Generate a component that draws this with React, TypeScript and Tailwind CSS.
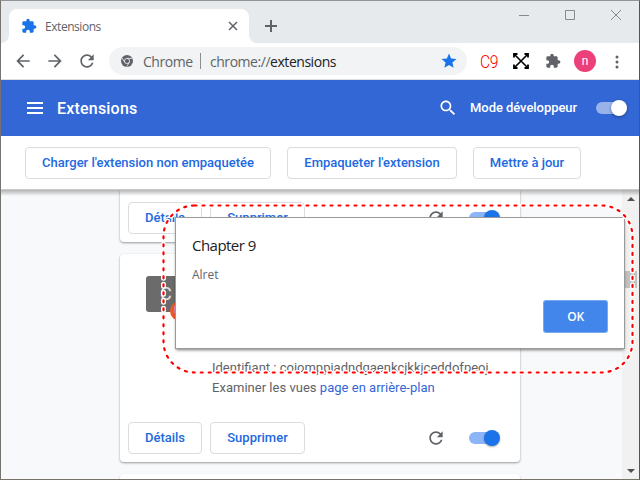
import React from 'react';

const PUZZLE =
  'M20.5 11H19V7c0-1.1-.9-2-2-2h-4V3.500C13 2.120 11.880 1 10.500 1S8 2.120 8 3.500V5H4c-1.100 0-1.990.9-1.990 2v3.800H3.500c1.490 0 2.700 1.210 2.700 2.700s-1.210 2.700-2.700 2.700H2V20c0 1.100.9 2 2 2h3.800v-1.500c0-1.490 1.210-2.700 2.700-2.700 1.490 0 2.700 1.210 2.700 2.700V22H17c1.100 0 2-.9 2-2v-4h1.500c1.380 0 2.500-1.120 2.500-2.500S21.880 11 20.500 11z';
const RELOAD =
  'M17.650 6.350C16.200 4.900 14.210 4 12 4c-4.420 0-7.990 3.580-7.990 8s3.570 8 7.990 8c3.730 0 6.840-2.550 7.730-6h-2.080c-.82 2.330-3.040 4-5.650 4-3.310 0-6-2.690-6-6s2.690-6 6-6c1.660 0 3.140.69 4.220 1.780L13 11h7V4l-2.350 2.350z';
const BACK = 'M20 11H7.830l5.590-5.590L12 4l-8 8 8 8 1.410-1.410L7.830 13H20v-2z';
const FORWARD = 'M12 4l-1.410 1.410L16.170 11H4v2h12.170l-5.580 5.590L12 20l8-8z';
const STAR = 'M12 17.270L18.180 21l-1.640-7.030L22 9.240l-7.190-.61L12 2 9.190 8.630 2 9.240l5.460 4.730L5.820 21z';
const SEARCH =
  'M15.500 14h-.79l-.28-.27C15.410 12.590 16 11.110 16 9.500 16 5.910 13.090 3 9.500 3S3 5.910 3 9.500 5.910 16 9.500 16c1.610 0 3.090-.59 4.230-1.570l.27.28v.79l5 4.990L20.490 19l-4.990-5zm-6 0C7.010 14 5 11.990 5 9.500S7.010 5 9.500 5 14 7.010 14 9.500 11.990 14 9.500 14z';

function Icon({ d, className }: { d: string; className: string }) {
  return (
    <svg viewBox="0 0 24 24" fill="currentColor" className={`shrink-0 ${className}`}>
      <path d={d} />
    </svg>
  );
}

function ActionButton({ children, className }: { children: React.ReactNode; className: string }) {
  return (
    <button
      className={`h-8 shrink-0 rounded border border-[#dadce0] bg-white pb-px text-[13px] leading-[29px] font-medium whitespace-nowrap text-[#2169e0] ${className}`}
    >
      {children}
    </button>
  );
}

function CardActions() {
  return (
    <div className="flex h-12 items-center gap-2 px-2">
      <ActionButton className="w-[74px]">Détails</ActionButton>
      <ActionButton className="w-[95px]">Supprimer</ActionButton>
      <Icon d={RELOAD} className="ml-auto size-5 text-[#5f6368]" />
      <span className="mr-3 ml-[15px] flex h-4 w-[31px] items-center">
        <span className="flex h-3 w-[29px] items-center justify-end rounded-full bg-[#8bb5f6]">
          <span className="-mr-[2px] size-4 shrink-0 rounded-full bg-[#1a73e8] shadow-[0_1px_2px_#0005]" />
        </span>
      </span>
    </div>
  );
}

function TabStrip() {
  return (
    <div className="flex h-[42px] shrink-0 items-start bg-[#e7eaed]">
      <svg viewBox="0 0 8 8" className="mt-[34px] size-2 shrink-0">
        <path d="M8 0v8H0a8 8 0 0 0 8-8z" fill="#fff" />
      </svg>
      <div className="mt-2 flex h-[34px] w-60 items-center rounded-t-lg bg-white pr-[11px] pl-3">
        <Icon d={PUZZLE} className="size-[16px] text-[#1a73e8]" />
        <span className="mt-[2px] ml-2 font-['Open_Sans',sans-serif] text-[12px] leading-4 tracking-[-0.45px] text-[#5f6368]">Extensions</span>
        <svg viewBox="0 0 10 10" className="ml-auto size-[10px]" stroke="#5f6368" strokeWidth="1.5">
          <path d="M1 1l8 8M9 1L1 9" />
        </svg>
      </div>
      <svg viewBox="0 0 8 8" className="mt-[34px] size-2 shrink-0">
        <path d="M0 0v8h8a8 8 0 0 1-8-8z" fill="#fff" />
      </svg>
      <svg viewBox="0 0 12 12" className="mt-[19px] ml-2 size-3" stroke="#5f6368" strokeWidth="2">
        <path d="M6 0v12M0 6h12" />
      </svg>
      <div className="mt-[9px] mr-[18px] ml-auto flex items-center gap-9">
        <svg viewBox="0 0 10 10" className="size-[10px]" stroke="#888b8e"><path d="M0 5.500h10" /></svg>
        <svg viewBox="0 0 10 10" className="size-[10px]" stroke="#888b8e" fill="none"><path d="M.5.500h9v9h-9z" /></svg>
        <svg viewBox="0 0 10 10" className="size-[10px]" stroke="#888b8e"><path d="M0 0l10 10M10 0L0 10" /></svg>
      </div>
    </div>
  );
}

function AddressBar() {
  return (
    <div className="flex h-[37px] shrink-0 items-center border-b border-[#dcdee0] bg-white text-[#5f6368]">
      <div className="ml-3 flex gap-3">
        <Icon d={BACK} className="size-5" />
        <Icon d={FORWARD} className="size-5" />
        <Icon d={RELOAD} className="size-5" />
      </div>
      <div className="ml-3 flex h-7 w-[358px] items-center rounded-full bg-[#f1f3f4] pr-[9px] pl-3 font-['Open_Sans',sans-serif] text-[14px]">
        <svg viewBox="0 0 12 12" className="size-3" fill="none">
          <circle cx="6" cy="6" r="6" fill="#5f6368" />
          <circle cx="6" cy="6" r="2.600" stroke="#f1f3f4" strokeWidth=".8" />
          <path d="M6 3.400h5M3.700 7.300L1.200 3M8.300 7.300L5.800 11.600" stroke="#f1f3f4" strokeWidth=".8" />
        </svg>
        <span className="ml-[10px] w-[49px] whitespace-nowrap tracking-[-0.45px]">Chrome</span>
        <span className="ml-2 h-4 w-px bg-[#8b8e92]" />
        <span className="ml-[9px] tracking-[-0.46px] whitespace-nowrap">
          chrome://<span className="text-[#202124]">extensions</span>
        </span>
        <Icon d={STAR} className="ml-auto size-[18px] text-[#1a73e8]" />
      </div>
      <div className="mt-px ml-[13px] w-[18px] origin-left scale-x-[0.83] font-['Roboto',sans-serif] text-[19px] leading-7 font-light tracking-[-0.6px] text-[#ff0000]">C9</div>
      <svg viewBox="0 0 16 16" className="ml-[15px] size-4 shrink-0" fill="none" stroke="#000">
        <path d="M1 1l14 14M15 1L1 15" strokeWidth="1.600" />
        <path d="M1 4.500V1h3.500M11.500 1H15v3.500M15 11.500V15h-3.500M4.500 15H1v-3.500" strokeWidth="1.800" />
      </svg>
      <Icon d={PUZZLE} className="ml-4 size-4" />
      <div className="ml-[13px] flex size-[22px] shrink-0 items-center justify-center rounded-full bg-[#ec407a] font-['Roboto',sans-serif] text-[12px] text-white">n</div>
      <svg viewBox="0 0 4 14" className="mt-px ml-[19px] h-[14px] w-1" fill="currentColor">
        <circle cx="2" cy="2" r="1.500" /><circle cx="2" cy="7" r="1.500" /><circle cx="2" cy="12" r="1.500" />
      </svg>
    </div>
  );
}

function PageHeader() {
  return (
    <header className="flex h-14 shrink-0 items-center bg-[#3367d6] text-white">
      <svg viewBox="0 0 16 12" className="ml-[26px] h-3 w-4" fill="currentColor">
        <path d="M0 0h16v2H0zM0 5h16v2H0zM0 10h16v2H0z" />
      </svg>
      <h1 className="mt-[2px] ml-[14px] text-[16px] font-medium tracking-[0.2px]">Extensions</h1>
      <Icon d={SEARCH} className="ml-auto size-5" />
      <span className="ml-3 w-[107px] text-[13px] font-medium tracking-[-0.05px] whitespace-nowrap">Mode développeur</span>
      <span className="mr-3 ml-[19px] flex h-3 w-[31px] items-center justify-end rounded-full bg-[#99b3ea]">
        <span className="size-4 shrink-0 rounded-full bg-white shadow-[0_1px_3px_#0006]" />
      </span>
    </header>
  );
}

function ExtensionList() {
  return (
    <div className="relative flex min-h-0 flex-1 overflow-hidden bg-[#f8f9fa]">
      <div className="ml-[119px] flex w-[400px] shrink-0 flex-col gap-3">
        <section className="flex h-[52px] shrink-0 flex-col justify-end rounded-b bg-white shadow-[0_1px_2px_#3c404366,0_1px_3px_#3c404326]">
          <CardActions />
        </section>
        <section className="flex h-52 shrink-0 flex-col rounded bg-white shadow-[0_1px_2px_#3c404366,0_1px_3px_#3c404326]">
          <div className="flex h-40 pt-[22px] pl-[26px]">
            <div className="relative h-9 w-9 rounded-[3px] bg-[#6b6b6b] text-[18px] leading-9 text-[#e4e4e4]">
              <span className="ml-[14px]">C</span>
              <span className="absolute top-[25px] left-6 size-5 rounded-full bg-[#ef5a28] pl-1 text-[12px] leading-5 font-medium">U</span>
            </div>
            <div className="mt-[82px] ml-[30px] text-[13px] leading-5 whitespace-nowrap text-[#5f6368]">
              <p>Identifiant : coiomppjadndgaenkcjkkjceddofpeoj</p>
              <p className="tracking-[0.02px]">
                Examiner les vues <a className="text-[#3367d6]">page en arrière-plan</a>
              </p>
            </div>
          </div>
          <CardActions />
        </section>
        <section className="h-10 shrink-0 rounded bg-white shadow-[0_1px_2px_#3c404366]" />
      </div>
      <div className="ml-auto flex w-[17px] flex-col items-center bg-[#f1f1f1] pt-[7px] pb-[6px]">
        <svg viewBox="0 0 8 4" className="h-1 w-2" fill="#505050"><path d="M0 4l4-4 4 4z" /></svg>
        <div className="mt-[70px] h-[17px] w-[13px] bg-[#c1c1c1]" />
        <svg viewBox="0 0 8 4" className="mt-auto h-1 w-2" fill="#505050"><path d="M0 0l4 4 4-4z" /></svg>
      </div>
      <div className="absolute inset-x-0 top-0 h-[6px] bg-linear-to-b from-[#00000048] to-transparent" />
    </div>
  );
}

function AlertDialog() {
  return (
    <div className="absolute top-[218px] left-[176px] flex h-[130px] w-[448px] flex-col bg-white px-4 pt-[17px] font-['Open_Sans',sans-serif] shadow-[0_0_0_1px_#9a9a9a,0_2px_3px_#0008]">
      <h2 className="text-[15px] leading-5 tracking-[-0.53px] text-[#202124]">Chapter 9</h2>
      <p className="mt-3 text-[12px] leading-4 text-[#5f6368]">Alret</p>
      <button className="mt-[18px] mr-px ml-auto h-[31px] w-[63px] rounded-[2px] bg-[#4285eb] pt-px text-[12px] font-semibold tracking-[-0.4px] text-white shadow-[0_0_0_1px_#78a8f0]">OK</button>
    </div>
  );
}

export default function App() {
  return (
    <main className="relative flex h-[480px] w-[640px] flex-col overflow-hidden border border-t-[#929497] border-r-[#59534f] border-b-[#77736a] border-l-[#77736f] bg-white font-['Roboto',sans-serif]">
      <TabStrip />
      <AddressBar />
      <PageHeader />
      <div className="flex h-[54px] shrink-0 items-center gap-4 border-b border-[#c9c9c9] pl-6">
        <ActionButton className="w-[246px]">Charger l'extension non empaquetée</ActionButton>
        <ActionButton className="w-[170px]">Empaqueter l'extension</ActionButton>
        <ActionButton className="w-[108px]">Mettre à jour</ActionButton>
      </div>
      <ExtensionList />
      <div className="absolute -inset-px">
        <AlertDialog />
        <svg viewBox="0 0 640 480" className="absolute inset-0 h-full w-full" fill="none" strokeLinecap="round" strokeDasharray="2 6">
          <rect x="163.500" y="205.500" width="469" height="167" rx="31" stroke="#fff" strokeWidth="5" />
          <rect x="163.500" y="205.500" width="469" height="167" rx="31" stroke="#f00" strokeWidth="2.200" />
        </svg>
      </div>
      <div className="absolute top-[171px] -left-px h-[46px] w-px bg-[#7d204d]" />
      <div className="absolute top-[381px] -left-px h-6 w-px bg-[#827818]" />
      <div className="absolute -bottom-px left-[45px] h-px w-[18px] bg-[#28306b]" />
      <div className="absolute -bottom-px left-[135px] h-px w-[29px] bg-[#4a4048]" />
      <div className="absolute -bottom-px left-[334px] h-px w-5 bg-[#2c5a4a]" />
      <div className="absolute -bottom-px left-[435px] h-px w-4 bg-[#242424]" />
      <div className="absolute -bottom-px left-[465px] h-px w-9 bg-[#6f7020]" />
      <div className="absolute -bottom-px left-[533px] h-px w-8 bg-[#26405e]" />
    </main>
  );
}
